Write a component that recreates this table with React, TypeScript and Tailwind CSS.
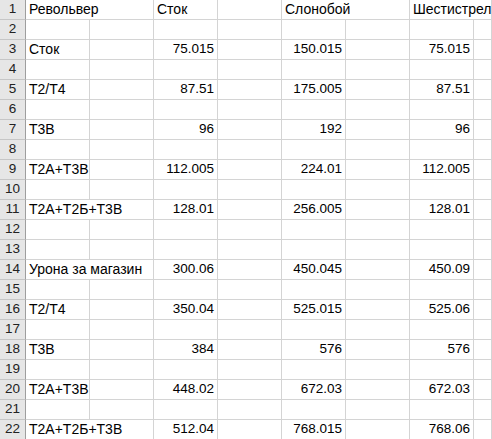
type Row = {
  label?: string;
  wide?: boolean;
  values?: [string, string, string];
};

const rows: Row[] = [
  {},
  {},
  { label: 'Сток', values: ['75.015', '150.015', '75.015'] },
  {},
  { label: 'Т2/Т4', values: ['87.51', '175.005', '87.51'] },
  {},
  { label: 'Т3В', values: ['96', '192', '96'] },
  {},
  { label: 'Т2А+Т3В', values: ['112.005', '224.01', '112.005'] },
  {},
  { label: 'Т2А+Т2Б+Т3В', wide: true, values: ['128.01', '256.005', '128.01'] },
  {},
  {},
  { label: 'Урона за магазин', wide: true, values: ['300.06', '450.045', '450.09'] },
  {},
  { label: 'Т2/Т4', values: ['350.04', '525.015', '525.06'] },
  {},
  { label: 'Т3В', values: ['384', '576', '576'] },
  {},
  { label: 'Т2А+Т3В', values: ['448.02', '672.03', '672.03'] },
  {},
  { label: 'Т2А+Т2Б+Т3В', wide: true, values: ['512.04', '768.015', '768.06'] },
];

const cell = 'h-[20px] border-r border-b border-[#d4d4d4] px-[2px] flex items-end pb-[1px] whitespace-nowrap overflow-hidden';
const text = `${cell} text-[14px] pl-[3px]`;
const num = `${cell} justify-end pr-[3px] text-[13.5px] pb-[2px]`;

function RowHead({ n }: { n: number }) {
  return (
    <div className="flex h-[20px] items-end justify-center border-r border-b border-r-[#9e9e9e] border-b-[#c6c6c6] bg-[#e6e6e6] pb-[2px] text-[13.5px] text-[#222]">
      {n}
    </div>
  );
}

export default function App() {
  return (
    <div
      className="h-[439px] w-[492px] overflow-hidden bg-white leading-[17px] text-black"
      style={{ fontFamily: '"Liberation Sans", Arial, sans-serif' }}
    >
      <div className="grid grid-cols-[26px_64px_64px_64px_64px_64px_64px_64px_1fr] content-start">
        <RowHead n={1} />
        <div className={`${text} col-span-2`}>Револьвер</div>
        <div className={text}>Сток</div>
        <div className={cell} />
        <div className={`${text} col-span-2`}>Слонобой</div>
        <div className={`${text} col-span-2`}>Шестистрел</div>

        {rows.slice(1).map((r, i) => {
          const n = i + 2;
          return (
            <div key={n} className="contents">
              <RowHead n={n} />
              {r.wide ? (
                <div className={`${text} col-span-2`}>{r.label}</div>
              ) : (
                <>
                  <div className={text}>{r.label}</div>
                  <div className={cell} />
                </>
              )}
              <div className={num}>{r.values?.[0]}</div>
              <div className={cell} />
              <div className={num}>{r.values?.[1]}</div>
              <div className={cell} />
              <div className={num}>{r.values?.[2]}</div>
              <div className={cell} />
            </div>
          );
        })}
      </div>
    </div>
  );
}
